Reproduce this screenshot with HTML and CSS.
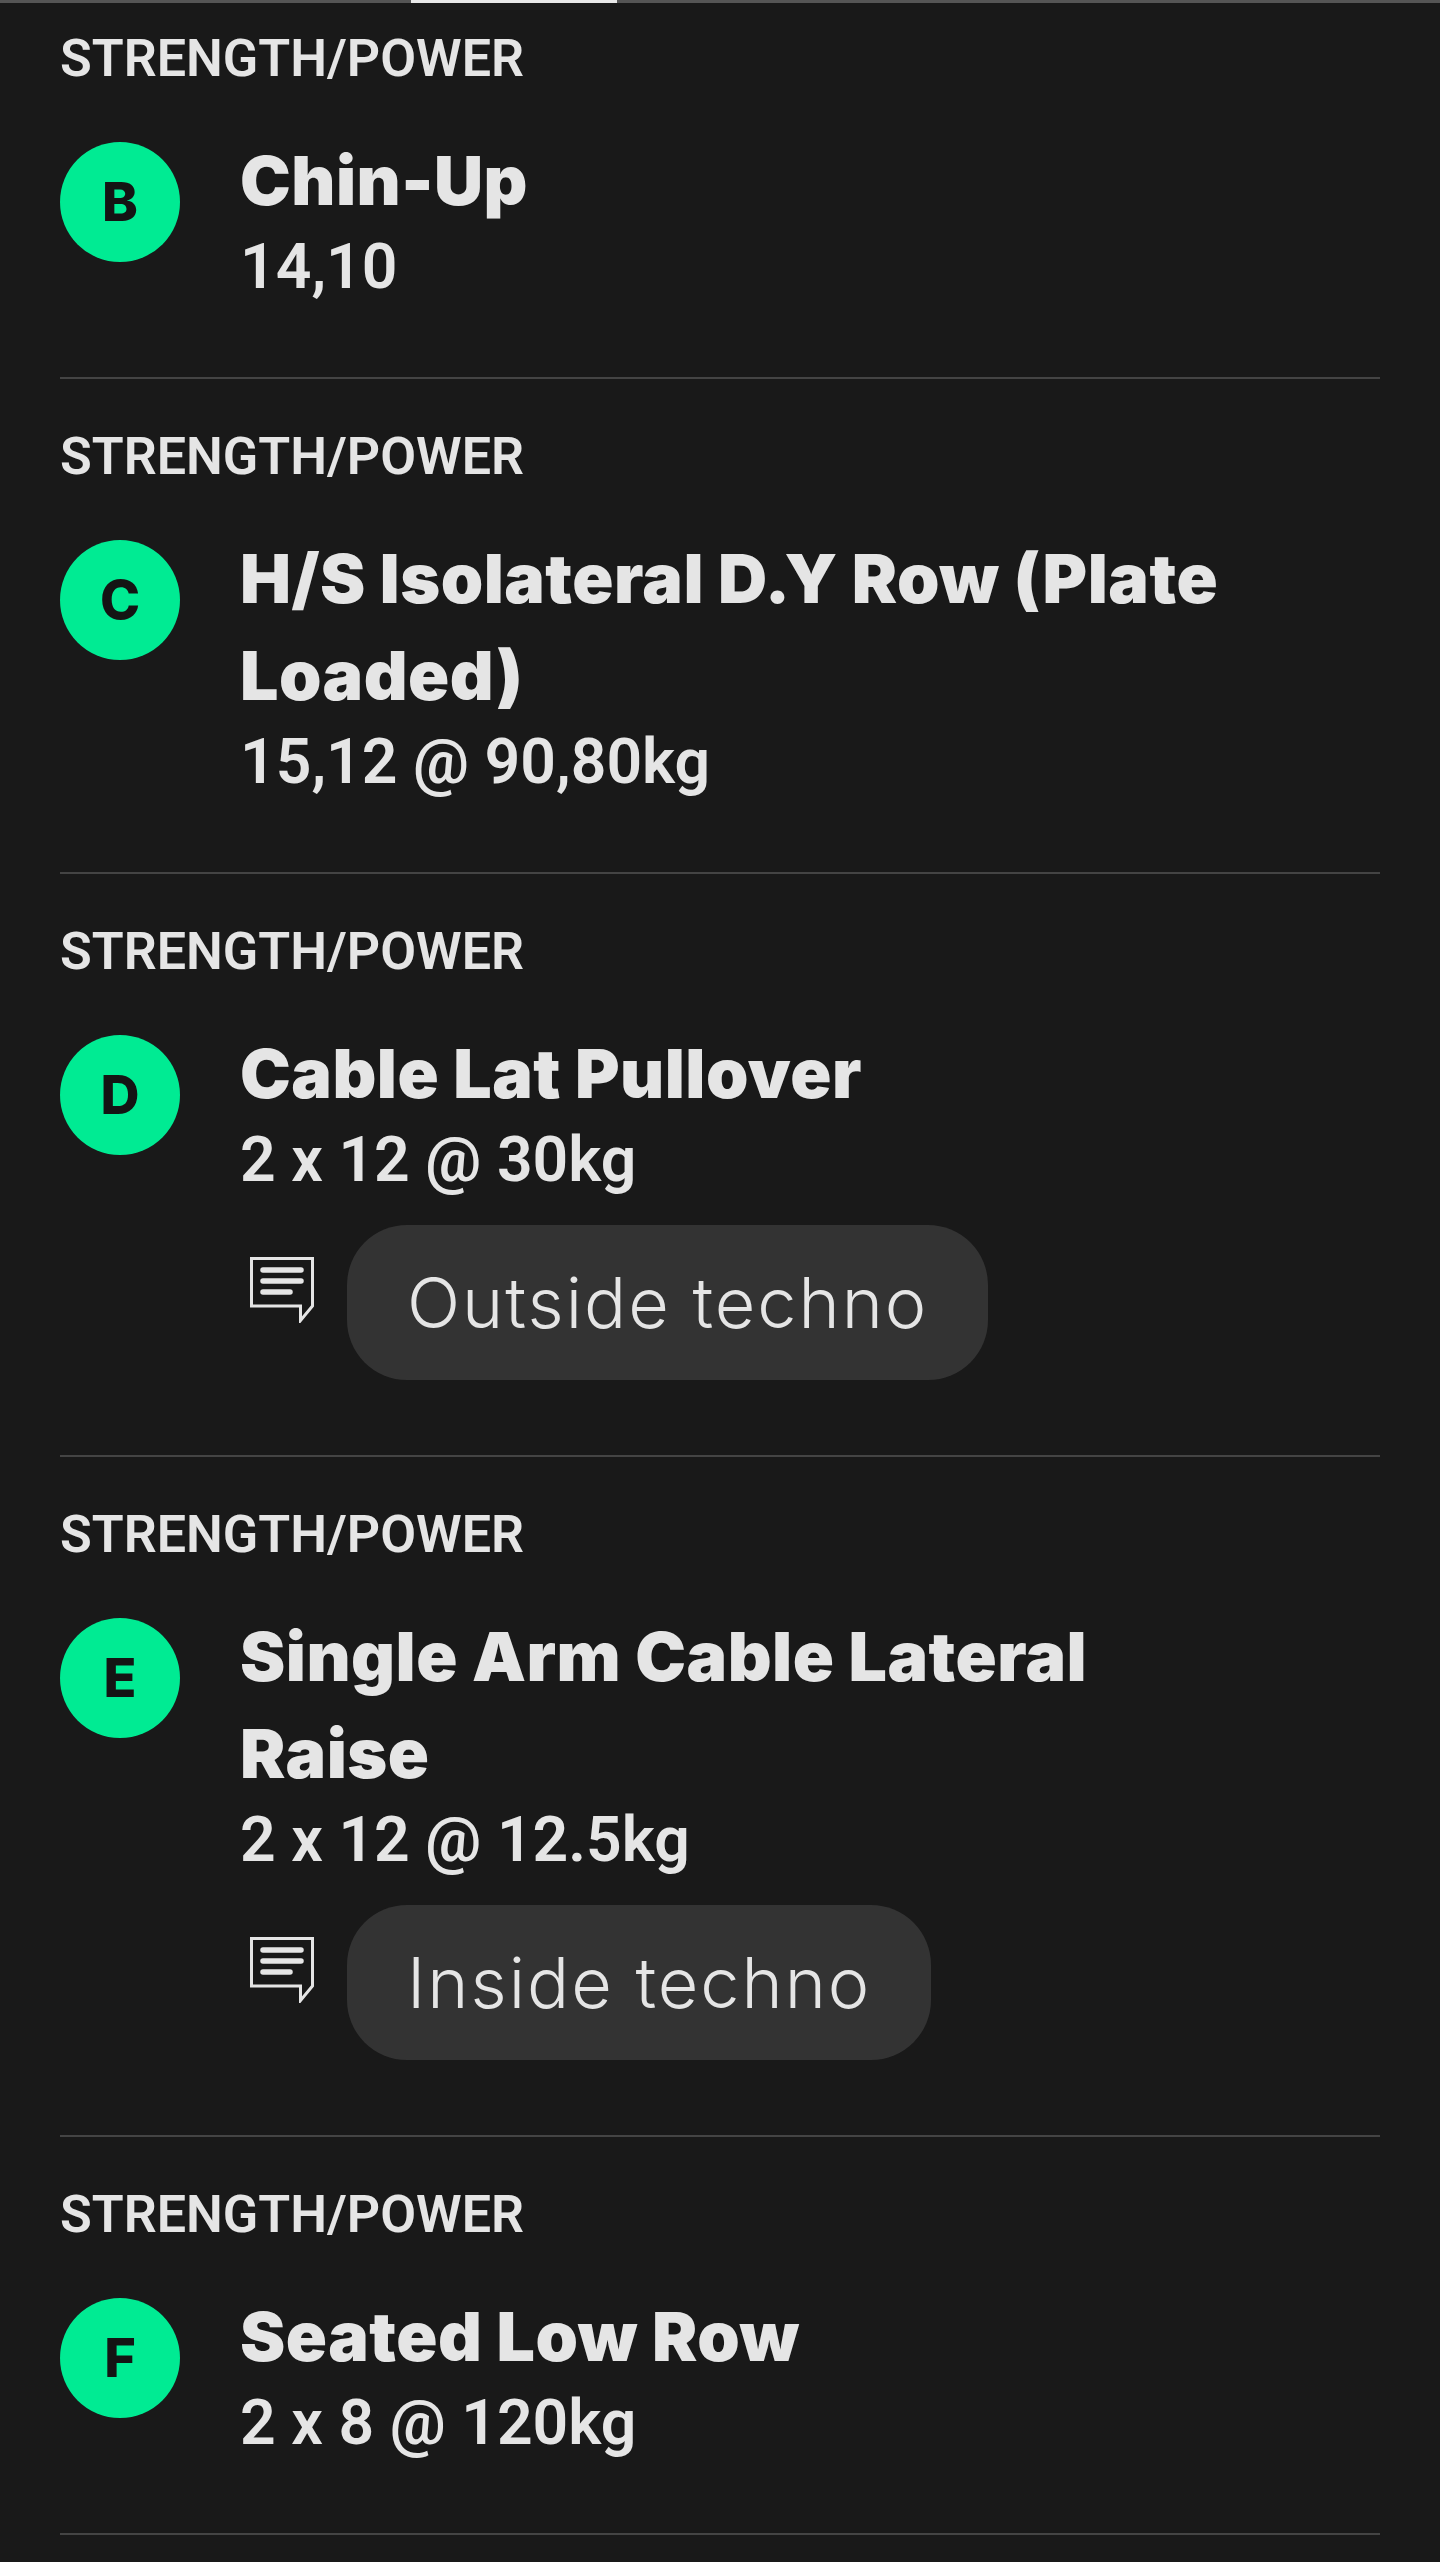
FILE: index.html
```html
<!DOCTYPE html>
<html lang="en">
<head>
<meta charset="utf-8">
<title>Workout</title>
<link rel="stylesheet" href="styles.css">
</head>
<body>
<div class="tabbar"><div class="tab-active"></div></div>
<main class="list">
  <section class="item">
    <div class="cat">STRENGTH/POWER</div>
    <div class="row">
      <div class="badge">B</div>
      <div class="body">
        <h2 class="name">Chin-Up</h2>
        <div class="sets">14,10</div>
      </div>
    </div>
  </section>
  <section class="item">
    <div class="cat">STRENGTH/POWER</div>
    <div class="row">
      <div class="badge">C</div>
      <div class="body">
        <h2 class="name">H/S Isolateral D.Y Row (Plate Loaded)</h2>
        <div class="sets">15,12 @ 90,80kg</div>
      </div>
    </div>
  </section>
  <section class="item">
    <div class="cat">STRENGTH/POWER</div>
    <div class="row">
      <div class="badge">D</div>
      <div class="body">
        <h2 class="name">Cable Lat Pullover</h2>
        <div class="sets">2 x 12 @ 30kg</div>
        <div class="note">
          <svg class="note-icon" viewBox="0 0 64 66" aria-hidden="true">
            <path class="note-outline" d="M1.5 1.5H62.5V49L50.5 63.5V49H1.5Z"/>
            <path class="note-lines" d="M13 13H51M13 24H51M13 35H40"/>
          </svg>
          <div class="bubble">Outside techno</div>
        </div>
      </div>
    </div>
  </section>
  <section class="item">
    <div class="cat">STRENGTH/POWER</div>
    <div class="row">
      <div class="badge">E</div>
      <div class="body">
        <h2 class="name">Single Arm Cable Lateral Raise</h2>
        <div class="sets">2 x 12 @ 12.5kg</div>
        <div class="note">
          <svg class="note-icon" viewBox="0 0 64 66" aria-hidden="true">
            <path class="note-outline" d="M1.5 1.5H62.5V49L50.5 63.5V49H1.5Z"/>
            <path class="note-lines" d="M13 13H51M13 24H51M13 35H40"/>
          </svg>
          <div class="bubble">Inside techno</div>
        </div>
      </div>
    </div>
  </section>
  <section class="item">
    <div class="cat">STRENGTH/POWER</div>
    <div class="row">
      <div class="badge">F</div>
      <div class="body">
        <h2 class="name">Seated Low Row</h2>
        <div class="sets">2 x 8 @ 120kg</div>
      </div>
    </div>
  </section>
</main>
</body>
</html>
```
FILE: styles.css
```css
* { box-sizing: border-box; }

html, body {
  margin: 0;
  background: #191919;
}

body {
  height: 2562px;
  overflow: hidden;
  color: #e5e5e5;
}

.tabbar {
  height: 3px;
  background: #555;
  padding-left: 411px;
}

.tab-active {
  width: 206px;
  height: 3px;
  background: #e8e8e8;
}

.list {
  padding: 0 60px;
}

.item {
  border-bottom: 2px solid #444;
  padding: 26px 0 72px;
}

.item + .item {
  padding-top: 48px;
}

.cat {
  font: 600 52px/60px Roboto, sans-serif;
  height: 60px;
}

.row {
  display: flex;
  margin-top: 53px;
}

.badge {
  flex: none;
  width: 120px;
  height: 120px;
  border-radius: 50%;
  background: #00eb93;
  color: #141414;
  font: 800 54px/120px Inter, sans-serif;
  text-align: center;
}

.body {
  margin: -10px 0 0 60px;
  padding-right: 120px;
  flex: 1;
}

.name {
  margin: 0;
  font: 900 68px/97px Inter, sans-serif;
  letter-spacing: 0.5px;
}

.sets {
  font: 600 62.5px/76px Roboto, sans-serif;
}

.note {
  display: flex;
  align-items: flex-start;
  margin: 27px 0 3px;
}

.note-icon {
  flex: none;
  width: 64px;
  height: 66px;
  margin: 32px 33px 0 10px;
}

.note-outline {
  fill: none;
  stroke: #e5e5e5;
  stroke-width: 3;
}

.note-lines {
  fill: none;
  stroke: #e5e5e5;
  stroke-width: 5.5;
  stroke-linecap: round;
}

.bubble {
  height: 155px;
  padding: 0 60px;
  border-radius: 60px;
  background: #333;
  font: 300 70px/155px Inter, sans-serif;
  letter-spacing: 2px;
}
```
